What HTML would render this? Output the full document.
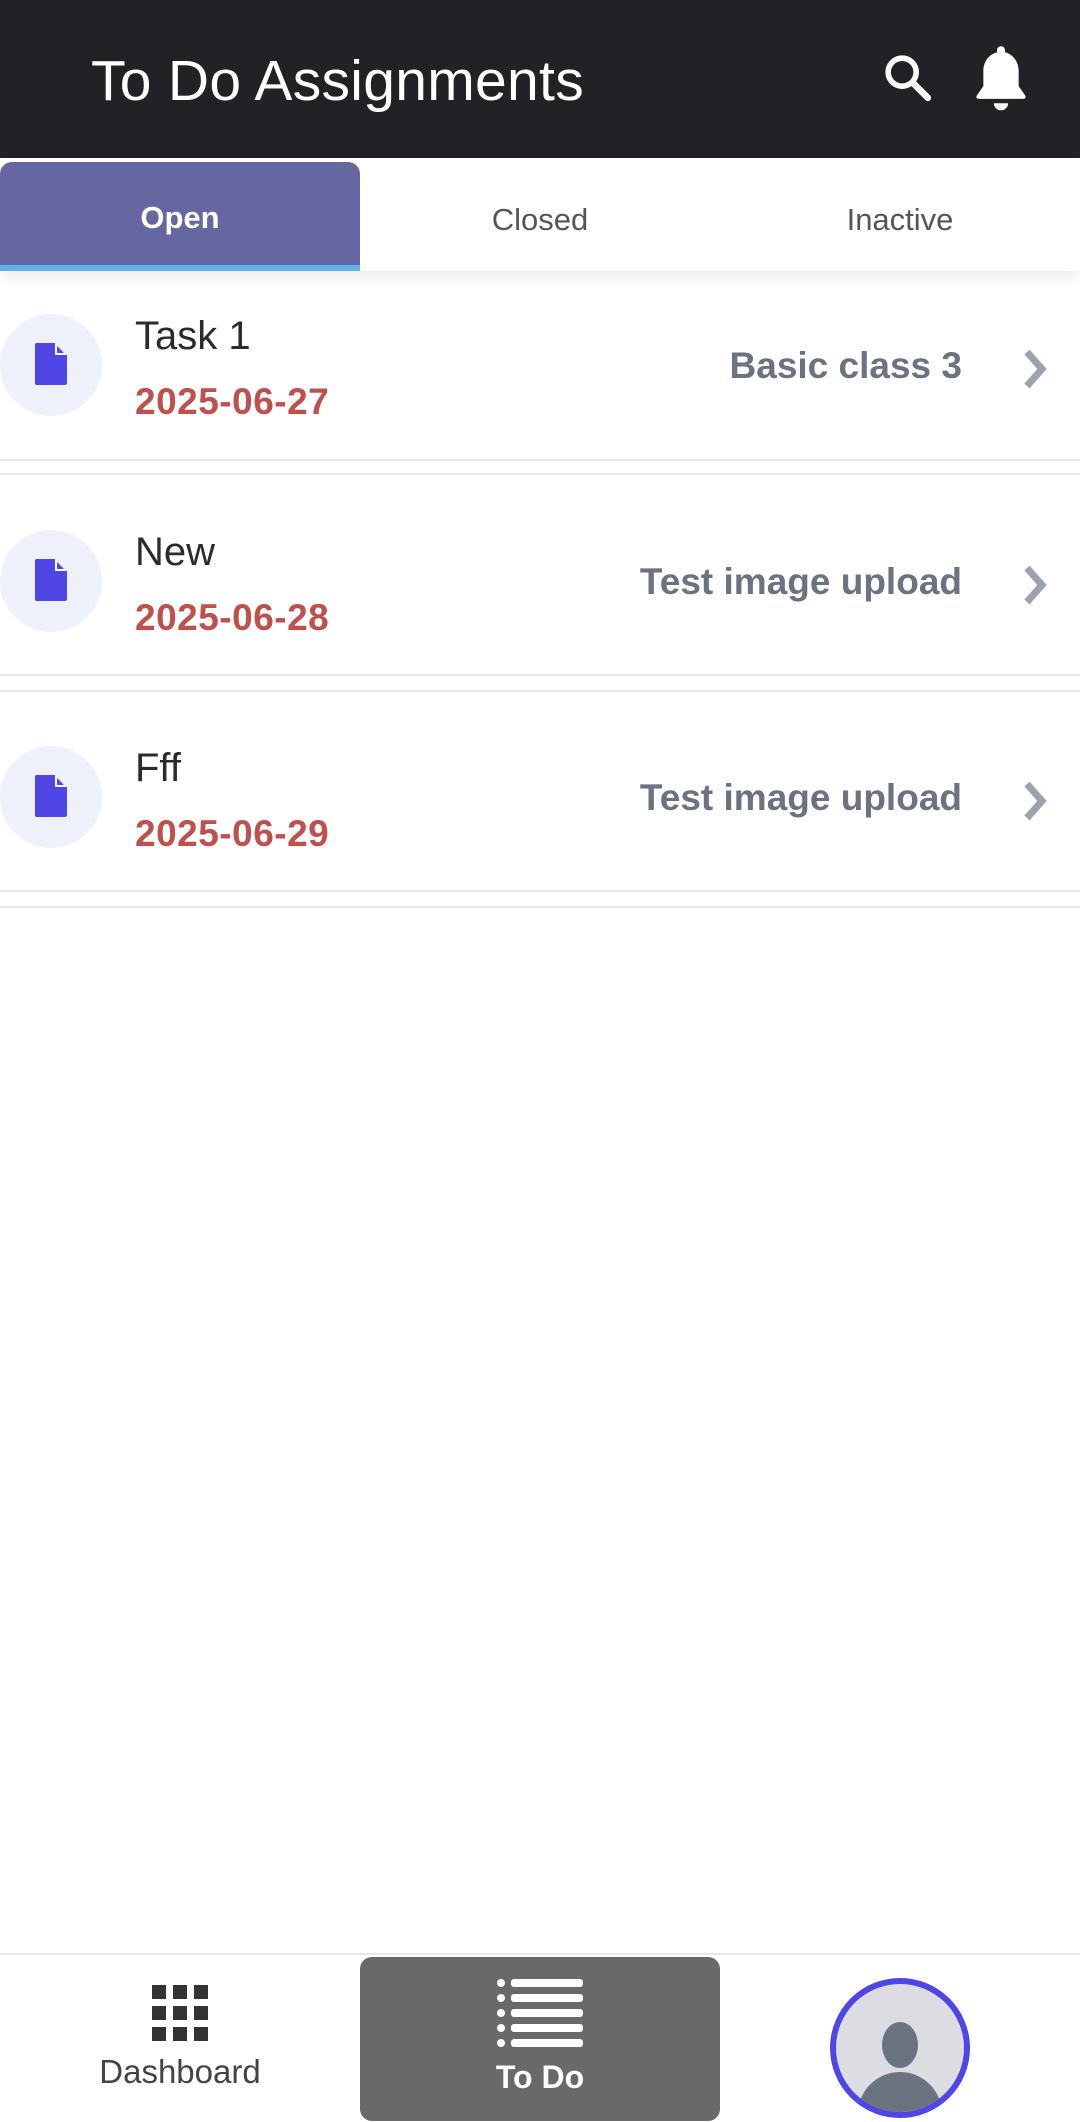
<!DOCTYPE html>
<html><head><meta charset="utf-8"><style>
*{margin:0;padding:0;box-sizing:border-box}
body{width:1080px;height:2122px;background:#fff;font-family:"Liberation Sans",sans-serif;position:relative;overflow:hidden}
.hdr{position:absolute;left:0;top:0;width:1080px;height:158px;background:#212226}
.title{position:absolute;left:91px;top:48px;font-size:57px;color:#fff;line-height:66px;letter-spacing:0.3px}
.tabs{position:absolute;left:0;top:158px;width:1080px;height:113px;background:#fff;box-shadow:0 6px 14px rgba(0,0,0,0.08)}
.tab{position:absolute;top:0;height:113px;width:360px;text-align:center;line-height:124px;font-size:31px;color:#555}
.open{left:0;top:4px;height:109px;background:#6667a0;color:#fff;font-weight:bold;border-radius:12px 12px 0 0;border-bottom:6px solid #5fb3e8;line-height:112px}
.row{position:absolute;left:0;width:1080px;height:200px}
.circ{position:absolute;left:0;top:43px;width:102px;height:102px;border-radius:51px;background:#eef0fb}
.doc{position:absolute;left:35px;top:74px}
.name{position:absolute;left:135px;top:43px;font-size:40px;color:#2b2b2b}
.date{position:absolute;left:135px;top:110px;font-size:37px;color:#c0504d;font-weight:bold;letter-spacing:0.5px}
.sub{position:absolute;right:118px;top:74px;font-size:37px;color:#6b7280;font-weight:bold}
.chev{position:absolute;left:1018px;top:74px}
.ln{position:absolute;left:0;width:1080px;height:2px;background:#e6e6e6}
.nav{position:absolute;left:0;top:1953px;width:1080px;height:169px;border-top:2px solid #e6e6e6}
</style></head><body>
<div class="hdr">
<div class="title">To Do Assignments</div>
<svg style="position:absolute;left:880px;top:50px" width="56" height="56" viewBox="0 0 24 24"><circle cx="9.5" cy="9.5" r="6" fill="none" stroke="#fff" stroke-width="2.4"/><path d="M14 14l6.5 6.5" stroke="#fff" stroke-width="2.8" stroke-linecap="round"/></svg>
<svg style="position:absolute;left:966px;top:42px" width="70" height="74" viewBox="0 0 24 26"><path d="M12 1.5c.9 0 1.4.7 1.4 1.5v.6c3 .8 4.8 3.5 4.8 6.6v5.3l2.3 3.3c.4.6 0 1.2-.7 1.2H4.2c-.7 0-1.1-.6-.7-1.2l2.3-3.3v-5.3c0-3.1 1.8-5.8 4.8-6.6V3c0-.8.5-1.5 1.4-1.5z" fill="#fff"/><path d="M9.5 21.5a2.5 2.5 0 0 0 5 0z" fill="#fff"/></svg>
</div>
<div class="tabs">
<div class="tab open">Open</div>
<div class="tab" style="left:360px">Closed</div>
<div class="tab" style="left:720px">Inactive</div>
</div>

<div class="row" style="top:271px">
<div class="circ"></div>
<svg class="doc" style="top:72px" width="32" height="42" viewBox="0 0 32 42"><path d="M2 0h18l12 12v28a2 2 0 0 1-2 2H2a2 2 0 0 1-2-2V2a2 2 0 0 1 2-2z" fill="#4f46e5"/><path d="M20 0v12h12z" fill="#fff"/><path d="M22 3v7h7z" fill="#4f46e5"/></svg>
<div class="name">Task 1</div><div class="date">2025-06-27</div><div class="sub">Basic class 3</div>
<svg class="chev" width="34" height="48" viewBox="0 0 34 48"><path d="M9 7l15 17-15 17" fill="none" stroke="#9ca3af" stroke-width="7"/></svg>
</div>
<div class="ln" style="top:459px"></div><div class="ln" style="top:473px"></div>

<div class="row" style="top:487px">
<div class="circ"></div>
<svg class="doc" style="top:72px" width="32" height="42" viewBox="0 0 32 42"><path d="M2 0h18l12 12v28a2 2 0 0 1-2 2H2a2 2 0 0 1-2-2V2a2 2 0 0 1 2-2z" fill="#4f46e5"/><path d="M20 0v12h12z" fill="#fff"/><path d="M22 3v7h7z" fill="#4f46e5"/></svg>
<div class="name">New</div><div class="date">2025-06-28</div><div class="sub">Test image upload</div>
<svg class="chev" width="34" height="48" viewBox="0 0 34 48"><path d="M9 7l15 17-15 17" fill="none" stroke="#9ca3af" stroke-width="7"/></svg>
</div>
<div class="ln" style="top:674px"></div><div class="ln" style="top:690px"></div>

<div class="row" style="top:703px">
<div class="circ"></div>
<svg class="doc" style="top:72px" width="32" height="42" viewBox="0 0 32 42"><path d="M2 0h18l12 12v28a2 2 0 0 1-2 2H2a2 2 0 0 1-2-2V2a2 2 0 0 1 2-2z" fill="#4f46e5"/><path d="M20 0v12h12z" fill="#fff"/><path d="M22 3v7h7z" fill="#4f46e5"/></svg>
<div class="name">Fff</div><div class="date">2025-06-29</div><div class="sub">Test image upload</div>
<svg class="chev" width="34" height="48" viewBox="0 0 34 48"><path d="M9 7l15 17-15 17" fill="none" stroke="#9ca3af" stroke-width="7"/></svg>
</div>
<div class="ln" style="top:890px"></div><div class="ln" style="top:906px"></div>

<div class="nav">
<svg style="position:absolute;left:152px;top:30px" width="56" height="56" viewBox="0 0 56 56" fill="#333"><rect x="0" y="0" width="14" height="14"/><rect x="21" y="0" width="14" height="14"/><rect x="42" y="0" width="14" height="14"/><rect x="0" y="21" width="14" height="14"/><rect x="21" y="21" width="14" height="14"/><rect x="42" y="21" width="14" height="14"/><rect x="0" y="42" width="14" height="14"/><rect x="21" y="42" width="14" height="14"/><rect x="42" y="42" width="14" height="14"/></svg>
<div style="position:absolute;left:40px;width:280px;top:98px;text-align:center;font-size:33px;color:#444">Dashboard</div>
<div style="position:absolute;left:360px;top:2px;width:360px;height:164px;background:#696969;border-radius:12px">
<svg style="position:absolute;left:137px;top:22px" width="86" height="70" viewBox="0 0 86 70" fill="#fff"><circle cx="4" cy="4" r="4"/><rect x="14" y="0" width="72" height="8" rx="3"/><circle cx="4" cy="19" r="4"/><rect x="14" y="15" width="72" height="8" rx="3"/><circle cx="4" cy="34" r="4"/><rect x="14" y="30" width="72" height="8" rx="3"/><circle cx="4" cy="49" r="4"/><rect x="14" y="45" width="72" height="8" rx="3"/><circle cx="4" cy="64" r="4"/><rect x="14" y="60" width="72" height="8" rx="3"/></svg>
<div style="position:absolute;left:0;width:360px;top:102px;text-align:center;font-size:32px;color:#fff;font-weight:bold">To Do</div>
</div>
<div style="position:absolute;left:830px;top:23px;width:140px;height:140px;border-radius:70px;border:6px solid #4f46e5;background:#dcdde3;overflow:hidden">
<div style="position:absolute;left:46px;top:38px;width:36px;height:46px;border-radius:18px/23px;background:#6b7280"></div>
<div style="position:absolute;left:22px;top:88px;width:84px;height:80px;border-radius:42px 42px 0 0;background:#6b7280"></div>
</div>
</div>
</body></html>
